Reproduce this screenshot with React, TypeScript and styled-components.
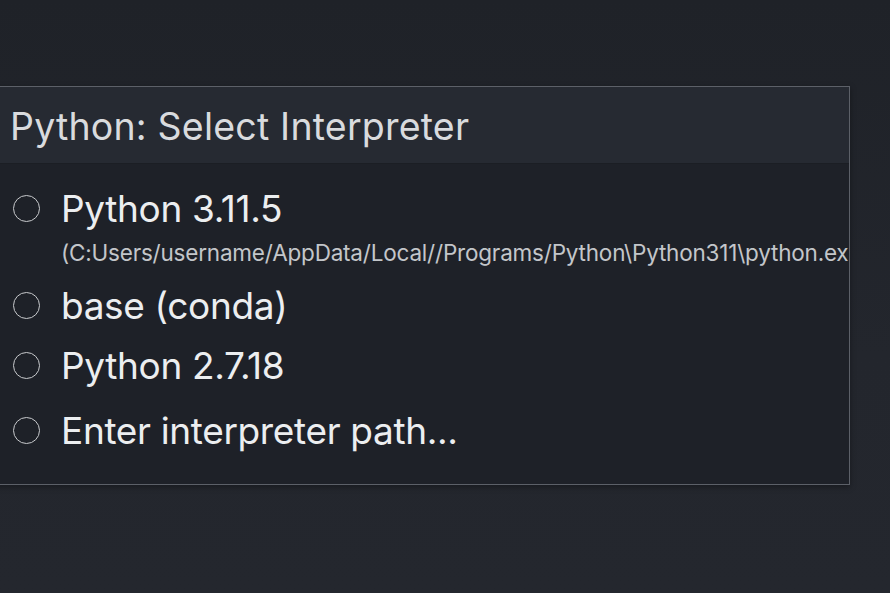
import styled, { createGlobalStyle } from 'styled-components';

const GlobalStyle = createGlobalStyle`
    html, body {
        margin: 0;
        padding: 0;
        background: #22252c;
        width: 890px;
        height: 593px;
        overflow: hidden;
    }
    * {
        box-sizing: border-box;
    }
`;

const Page = styled.div`
    width: 890px;
    height: 593px;
    padding-top: 86px;
    background: linear-gradient(180deg, #1f2228 0%, #23262d 60%, #24272e 100%);
    font-family: Inter, "Noto Sans", sans-serif;
`;

const Panel = styled.div`
    margin-left: -10px;
    width: 860px;
    height: 399px;
    border: 1.5px solid #5c6068;
    background: #1e2128;
    overflow: hidden;
    box-shadow: 0 2px 6px rgba(0, 0, 0, 0.35);
`;

const Header = styled.div`
    height: 77px;
    background: #262a32;
    display: flex;
    align-items: center;
    padding: 3px 0 0 19px;
    border-bottom: 1px solid #1b1e24;
`;

const Title = styled.h1`
    margin: 0;
    font-size: 37.5px;
    font-weight: 400;
    color: #d9dbde;
    letter-spacing: 0.2px;
`;

const List = styled.ul`
    list-style: none;
    margin: 0;
    padding: 22px 0 0 0;
    display: flex;
    flex-direction: column;
`;

const Item = styled.li<{ $gap: number }>`
    display: flex;
    align-items: flex-start;
    gap: 21px;
    padding-left: 22px;
    margin-bottom: ${(p) => p.$gap}px;
`;

const Radio = styled.span`
    width: 27px;
    height: 27px;
    margin-top: 9px;
    border-radius: 50%;
    border: 1.5px solid #c8cacd;
    flex-shrink: 0;
`;

const Texts = styled.div`
    display: flex;
    flex-direction: column;
    white-space: nowrap;
`;

const Label = styled.span`
    font-size: 37px;
    line-height: 46px;
    color: #eceef0;
    letter-spacing: -0.35px;
`;

const Detail = styled.span`
    margin-top: 6px;
    font-size: 22.5px;
    line-height: 30px;
    color: #c3c6ca;
    letter-spacing: -0.2px;
`;

type Option = {
    label: string,
    detail?: string,
    gap: number
}

const options: Option[] = [
    { label: 'Python 3.11.5', detail: '(C:Users/username/AppData/Local//Programs/Python\\Python311\\python.ex', gap: 15 },
    { label: 'base (conda)', gap: 14 },
    { label: 'Python 2.7.18', gap: 19 },
    { label: 'Enter interpreter path...', gap: 0 },
];

const App = () => (
    <>
        <GlobalStyle />
        <Page>
            <Panel>
                <Header>
                    <Title>Python: Select Interpreter</Title>
                </Header>
                <List>
                    {options.map((option) => (
                        <Item key={option.label} $gap={option.gap}>
                            <Radio />
                            <Texts>
                                <Label>{option.label}</Label>
                                {option.detail && <Detail>{option.detail}</Detail>}
                            </Texts>
                        </Item>
                    ))}
                </List>
            </Panel>
        </Page>
    </>
);

export default App;
